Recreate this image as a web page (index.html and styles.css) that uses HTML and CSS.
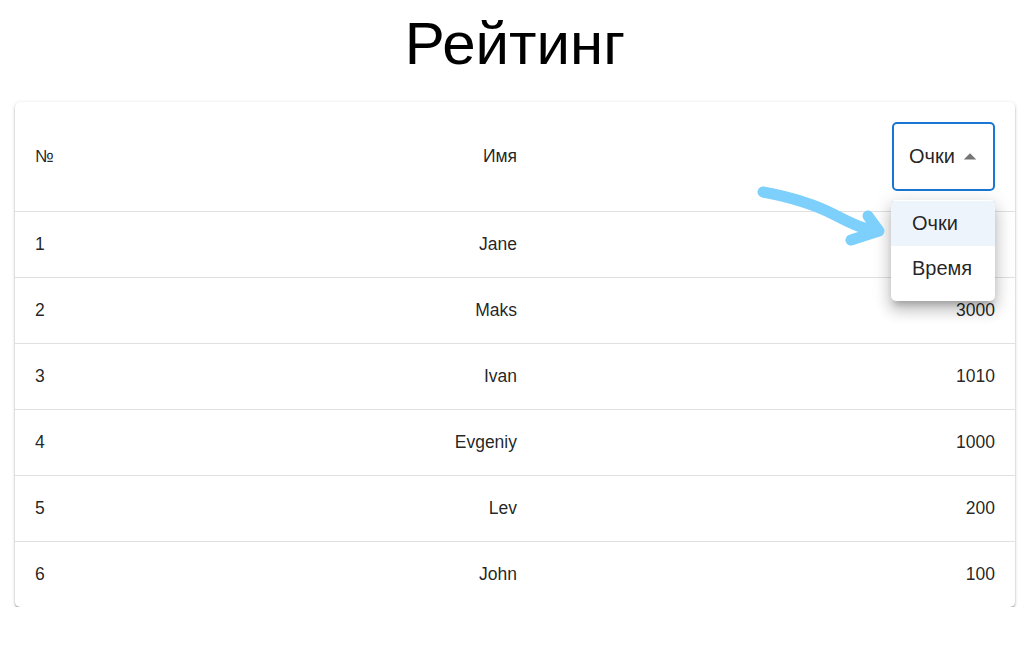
FILE: index.html
```html
<!DOCTYPE html>
<html lang="ru">
<head>
<meta charset="utf-8">
<title>Рейтинг</title>
<link rel="stylesheet" href="styles.css">
</head>
<body>
<div class="page">
  <h1 class="title">Рейтинг</h1>
  <div class="card">
    <table class="rating">
      <colgroup>
        <col class="c-num">
        <col class="c-name">
        <col class="c-score">
      </colgroup>
      <thead>
        <tr>
          <th class="left">№</th>
          <th class="right">Имя</th>
          <th class="right">
            <div class="select-wrap">
              <div class="select">
                <span>Очки</span>
                <svg class="caret" viewBox="0 0 24 24" width="30" height="30"><path d="M7 14l5-5 5 5z" fill="#757575"/></svg>
              </div>
              <ul class="menu">
                <li class="item selected">Очки</li>
                <li class="item">Время</li>
              </ul>
            </div>
          </th>
        </tr>
      </thead>
      <tbody>
        <tr><td class="left">1</td><td class="right">Jane</td><td class="right">3010</td></tr>
        <tr><td class="left">2</td><td class="right">Maks</td><td class="right">3000</td></tr>
        <tr><td class="left">3</td><td class="right">Ivan</td><td class="right">1010</td></tr>
        <tr><td class="left">4</td><td class="right">Evgeniy</td><td class="right">1000</td></tr>
        <tr><td class="left">5</td><td class="right">Lev</td><td class="right">200</td></tr>
        <tr><td class="left">6</td><td class="right">John</td><td class="right">100</td></tr>
      </tbody>
    </table>
  </div>
  <svg class="hint-arrow" viewBox="0 0 150 70" width="150" height="70">
    <path d="M13 13 C 40 18, 62 24, 85 36 S 115 50, 128 52" fill="none" stroke="#7dd0fb" stroke-width="11" stroke-linecap="round" stroke-linejoin="round"/>
    <path d="M118 37 L 129 52 L 101 61" fill="none" stroke="#7dd0fb" stroke-width="11" stroke-linecap="round" stroke-linejoin="round"/>
  </svg>
</div>
</body>
</html>
```

FILE: styles.css
```css
* { box-sizing: border-box; }

html, body {
  margin: 0;
  padding: 0;
  background: #ffffff;
}

body {
  font-family: "Liberation Sans", Arial, sans-serif;
  color: rgba(0, 0, 0, 0.87);
}

.page {
  position: relative;
  padding: 0 21px 0 15px;
}

.title {
  margin: 9px 0 23px;
  font-size: 60px;
  line-height: 70px;
  font-weight: 400;
  text-align: center;
  color: #000;
}

.card {
  background: #fff;
  border-radius: 5px;
  box-shadow: 0 3px 3px -1px rgba(0, 0, 0, 0.27), 0 1px 2px 0 rgba(0, 0, 0, 0.16), 0 1px 4px 0 rgba(0, 0, 0, 0.12);
}

.rating {
  width: 100%;
  border-collapse: collapse;
  table-layout: fixed;
  font-size: 17.5px;
  line-height: 25px;
}

.c-num { width: 261px; }
.c-name { width: 261px; }

.rating th,
.rating td {
  padding: 20px;
  font-weight: 400;
  border-bottom: 1px solid #e0e0e0;
  vertical-align: middle;
}

.rating tbody tr:last-child td { border-bottom: none; }

.left { text-align: left; }
.right { text-align: right; }

.select-wrap {
  position: relative;
  display: inline-block;
  width: 103px;
  text-align: left;
}

.select {
  height: 69px;
  border: 2px solid #1976d2;
  border-radius: 5px;
  display: flex;
  align-items: center;
  padding-left: 15px;
  font-size: 20px;
  color: rgba(0, 0, 0, 0.87);
}

.caret {
  margin-left: 0;
  display: block;
}

.menu {
  position: absolute;
  top: 78px;
  left: -1px;
  width: 104px;
  margin: 0;
  padding: 1px 0 10px;
  list-style: none;
  background: #fff;
  border-radius: 5px;
  box-shadow: 0 6px 6px -3px rgba(0, 0, 0, 0.2), 0 10px 14px 1px rgba(0, 0, 0, 0.14), 0 4px 18px 3px rgba(0, 0, 0, 0.12);
  z-index: 2;
}

.item {
  height: 45px;
  display: flex;
  align-items: center;
  padding-left: 21px;
  font-size: 20px;
  color: rgba(0, 0, 0, 0.87);
}

.item.selected {
  background: rgba(25, 118, 210, 0.08);
}

.hint-arrow {
  position: absolute;
  left: 750px;
  top: 170px;
  z-index: 3;
}
```
